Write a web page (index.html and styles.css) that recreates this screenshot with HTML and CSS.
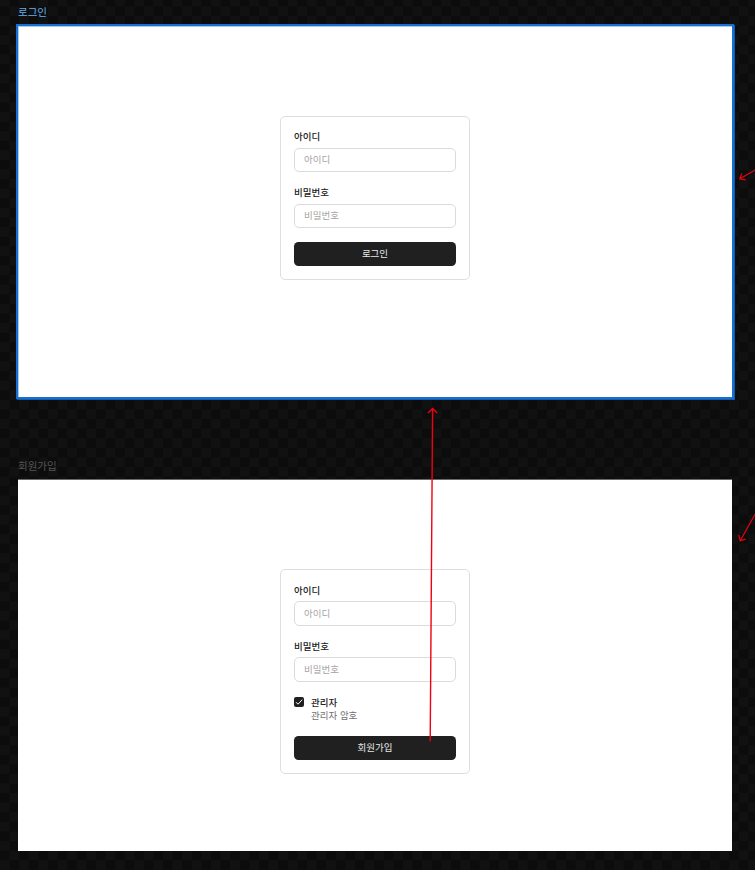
FILE: index.html
```html
<!DOCTYPE html>
<html lang="ko">
<head>
<meta charset="utf-8">
<title>로그인 / 회원가입</title>
<link rel="stylesheet" href="styles.css">
</head>
<body>
<main class="canvas">
  <section class="board">
    <h2 class="title title-active">로그인</h2>
    <div class="frame frame-selected">
      <form class="card">
        <div class="field"><span class="label">아이디</span><div class="input">아이디</div></div>
        <div class="field"><span class="label">비밀번호</span><div class="input">비밀번호</div></div>
        <div class="button">로그인</div>
      </form>
    </div>
  </section>
  <section class="board board-signup">
    <h2 class="title">회원가입</h2>
    <div class="frame">
      <form class="card">
        <div class="field"><span class="label">아이디</span><div class="input">아이디</div></div>
        <div class="field"><span class="label">비밀번호</span><div class="input">비밀번호</div></div>
        <div class="check">
          <svg class="box" viewBox="0 0 10 10"><rect width="10" height="10" rx="2" fill="#202020"/><path d="M2 5.2 4 7.2 8.2 2.7" fill="none" stroke="#fff" stroke-width="1"/></svg>
          <div class="check-text"><span class="label">관리자</span><span class="hint">관리자 암호</span></div>
        </div>
        <div class="button">회원가입</div>
      </form>
    </div>
  </section>
  <svg class="arrows" viewBox="0 0 755 870" fill="none" stroke="#f00012" stroke-width="1.4">
    <path d="M430.2 741.5 432.6 408.5M428 413 432.6 408.5 437.2 413"/>
    <path stroke-width="1.2" d="M756 169.6 739.8 178.8M741.8 173.4 739.8 178.8 745.6 179.8"/>
    <path stroke-width="1.2" d="M756 512.6 740.2 540.8M738.8 534.8 740.2 540.8 745.6 539.2"/>
  </svg>
</main>
</body>
</html>
```
FILE: styles.css
```css
* { box-sizing: border-box; }
body {
  margin: 0;
  font-family: "Noto Sans CJK KR", sans-serif;
  font-size: 9.5px;
  line-height: 13px;
  color: #202020;
}
.canvas {
  position: relative;
  width: 755px;
  height: 870px;
  overflow: hidden;
  padding: 4px 0 0 18px;
  background: repeating-conic-gradient(#0c0c0c 0 25%, #111 0 50%) 0 -3.2px / 19.2px 19.2px;
}
.board { width: 714px; }
.board-signup { margin-top: 61px; }
.title {
  margin: 0 0 6px;
  height: 16px;
  font-size: 10.5px;
  line-height: 15px;
  font-weight: 400;
  color: #555;
}
.title-active { color: #64b0f2; }
.frame {
  height: 371px;
  padding: 90px 0 0 262px;
  background: #fff;
}
.frame-selected {
  box-shadow: 0 0 0 2px #176fd1, 1px 1px 0 2px #0e5cb0, inset 1px 1px 0 #a9c9ea;
}
.board-signup .frame {
  padding-top: 89px;
  box-shadow: 0 -1px 0 #6a6a6a;
}
.card {
  width: 190px;
  padding: 13px;
  border: 1px solid #dedede;
  border-radius: 5px;
}
.board-signup .card { padding-top: 14px; }
.field { margin-bottom: 14px; }
.label { display: block; height: 13px; font-weight: 500; }
.input {
  margin-top: 5px;
  height: 24px;
  padding: 0 9px;
  border: 1px solid #dbdbdb;
  border-radius: 5px;
  line-height: 21px;
  color: #a4a4a4;
}
.board-signup .input { margin-top: 4px; height: 25px; line-height: 22px; }
.button {
  height: 24px;
  border-radius: 4.5px;
  background: #202020;
  color: #e8e8e8;
  line-height: 23px;
  text-align: center;
}
.check { display: flex; gap: 7px; margin-bottom: 14px; }
.box { width: 10px; height: 10px; margin-top: 1px; }
.hint { display: block; color: #707070; }
.arrows {
  position: absolute;
  top: 0;
  left: 0;
  width: 755px;
  height: 870px;
}
```
